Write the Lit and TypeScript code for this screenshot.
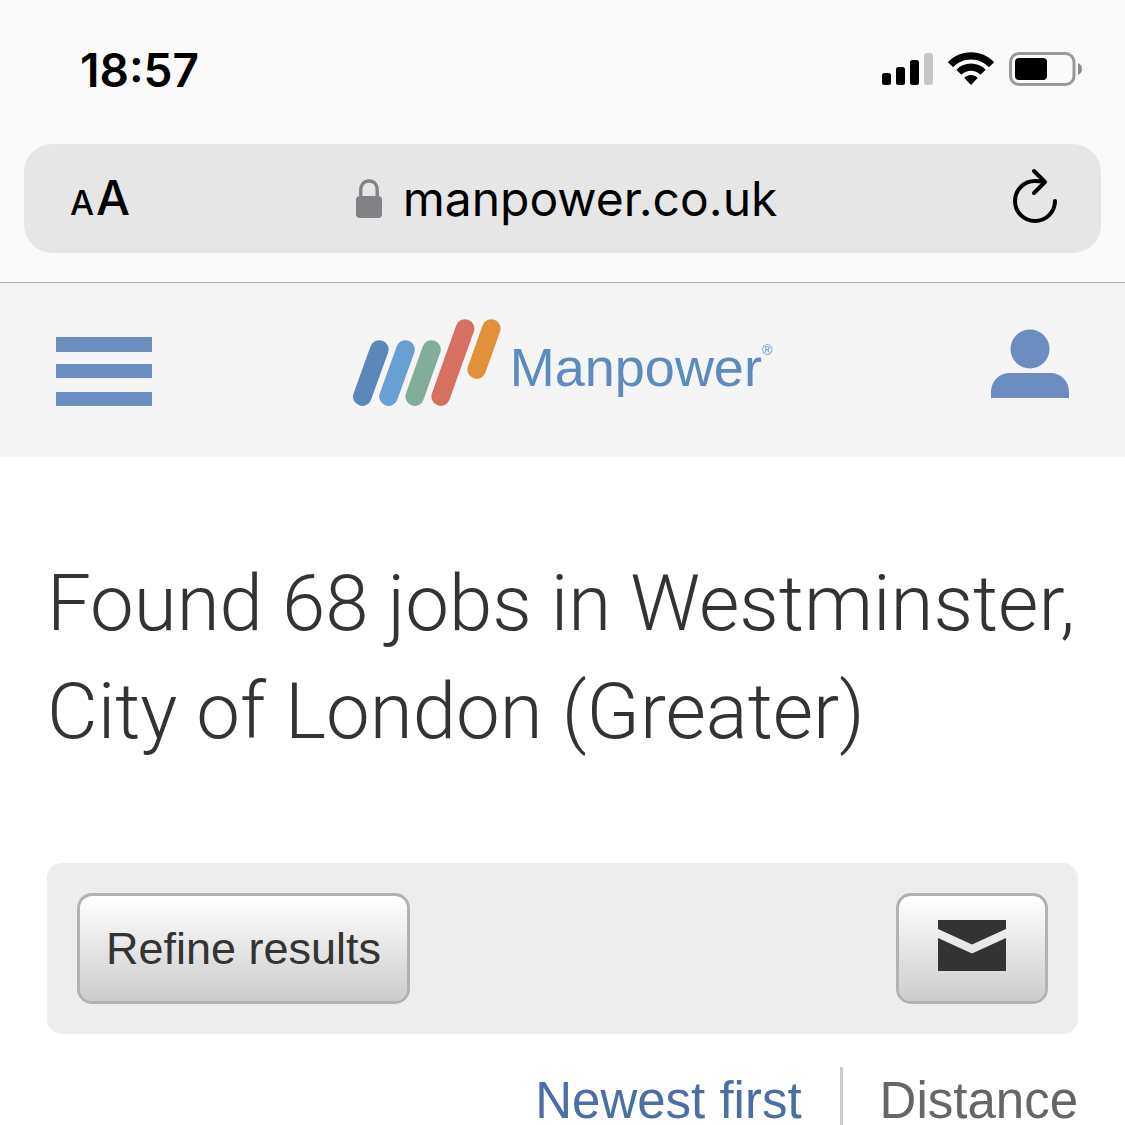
import { LitElement, html, css } from "lit";
import { customElement, state } from "lit/decorators.js";

@customElement("status-bar")
class StatusBar extends LitElement {
  static styles = css`
    :host {
      display: flex;
      justify-content: space-between;
      align-items: center;
      padding: 40px 42px 0 80px;
      color: #000;
      font-family: Inter, "Liberation Sans", sans-serif;
    }
    .time {
      font-size: 46px;
      line-height: 60px;
      font-weight: 600;
    }
    .icons {
      display: flex;
      align-items: center;
      gap: 15px;
      padding-bottom: 2px;
    }
    svg {
      display: block;
    }
  `;
  render() {
    return html`
      <span class="time">18:57</span>
      <div class="icons">
        <svg width="51" height="34" viewBox="0 0 51 34" role="img" aria-label="Signal: three of four bars">
          <rect x="0" y="21" width="9" height="12" rx="2.5" />
          <rect x="14" y="15" width="9" height="18" rx="2.5" />
          <rect x="28" y="8" width="9" height="25" rx="2.5" />
          <rect x="42" y="1" width="9" height="32" rx="2.5" fill="#c7c7c7" />
        </svg>
        <svg width="46" height="34" viewBox="0 0 46 34" role="img" aria-label="Wi-Fi">
          <path d="M23 .3C14 .3 6 4 .3 9.800Q0 10.200 .4 10.700L4.600 14.800Q5 15.100 5.500 14.700C10 10.200 16 7.400 23 7.400S36 10.200 40.500 14.700Q41 15.100 41.400 14.800L45.600 10.700Q46 10.200 45.700 9.800C40 4 32 .3 23 .3Z" />
          <path d="M23 11.500C17.500 11.500 12.500 13.700 8.800 17.300Q8.400 17.800 8.800 18.200L13 22.300Q13.500 22.700 14 22.300C16.500 20 19.500 18.700 23 18.700S29.500 20 32 22.300Q32.500 22.700 33 22.300L37.200 18.200Q37.600 17.800 37.200 17.300C33.500 13.700 28.500 11.500 23 11.500Z" />
          <path d="M23 23C20.500 23 18.300 23.900 16.600 25.400Q16.200 25.900 16.600 26.300L22.500 32.500Q23 32.900 23.500 32.500L29.400 26.300Q29.800 25.900 29.400 25.400C27.700 23.900 25.500 23 23 23Z" />
        </svg>
        <svg width="74" height="34" viewBox="0 0 74 34" role="img" aria-label="Battery about half full">
          <rect x="1.500" y="1.500" width="63.500" height="31" rx="8.500" fill="none" stroke="#999" stroke-width="3" />
          <rect x="6" y="6" width="32" height="22" rx="4" />
          <path d="M69 11C71.500 12 73 14.300 73 17S71.500 22 69 23Z" fill="#8c8c8c" />
        </svg>
      </div>
    `;
  }
}

@customElement("address-bar")
class AddressBar extends LitElement {
  static styles = css`
    :host {
      display: grid;
      grid-template-columns: 1fr auto 1fr;
      align-items: center;
      margin: 44px 24px 29px;
      padding: 0 42px;
      height: 109px;
      border-radius: 28px;
      background: #e6e6e7;
      font-family: Inter, "Liberation Sans", sans-serif;
    }
    button {
      display: flex;
      align-items: center;
      border: 0;
      padding: 0;
      background: none;
      color: #000;
      font: inherit;
      cursor: pointer;
    }
    svg {
      display: block;
    }
    .text-size {
      justify-self: start;
      align-items: baseline;
      gap: 2px;
      padding: 4px 0 0 4px;
      font-weight: 500;
      line-height: 60px;
    }
    .small {
      font-size: 34px;
    }
    .large {
      font-size: 48px;
    }
    .site {
      gap: 21px;
      padding: 0 0 0 8px;
      font-size: 48px;
      line-height: 60px;
    }
    .reload {
      justify-self: end;
      padding: 0 1px 6px 0;
    }
  `;
  render() {
    return html`
      <button class="text-size" type="button" aria-label="Text size">
        <span class="small">A</span><span class="large">A</span>
      </button>
      <button class="site" type="button">
        <svg width="26" height="40" viewBox="0 0 26 40" aria-hidden="true">
          <path d="M4.800 18V11C4.800 5.300 8 2 13 2S21.200 5.300 21.200 11V18" fill="none" stroke="#828186" stroke-width="3.400" />
          <rect x="0" y="17" width="26" height="22" rx="4" fill="#828186" />
        </svg>
        <span>manpower.co.uk</span>
      </button>
      <button class="reload" type="button" aria-label="Reload">
        <svg width="46" height="56" viewBox="0 0 46 56" fill="none" stroke="#000" stroke-width="4" stroke-linecap="round" stroke-linejoin="round" aria-hidden="true">
          <path d="M43 33A20 20 0 1 1 23 13Q28 13 32 14" />
          <path d="M22 3L33 14L22 25" />
        </svg>
      </button>
    `;
  }
}

@customElement("site-header")
class SiteHeader extends LitElement {
  static styles = css`
    :host {
      display: grid;
      grid-template-columns: 1fr auto 1fr;
      align-items: center;
      height: 174px;
      padding: 0 56px;
      border-top: 1px solid #b0b0b1;
      background: #f5f5f5;
    }
    button {
      display: block;
      border: 0;
      padding: 0;
      background: none;
      cursor: pointer;
    }
    svg {
      display: block;
    }
    .menu {
      padding-top: 4px;
    }
    .account {
      justify-self: end;
      padding-bottom: 12px;
    }
    .logo {
      display: flex;
      align-items: center;
      gap: 9px;
      padding-bottom: 14px;
      color: #5b8bbf;
      font-family: "Liberation Sans", Arial, sans-serif;
      text-decoration: none;
    }
    .name {
      display: flex;
      font-size: 54px;
      line-height: 60px;
      padding-top: 8px;
    }
    .mark {
      font-size: 14px;
      line-height: 26px;
    }
  `;
  render() {
    return html`
      <button class="menu" type="button" aria-label="Menu">
        <svg width="96" height="70" viewBox="0 0 96 70" fill="#6b8dc0" aria-hidden="true">
          <rect width="96" height="15" />
          <rect y="27" width="96" height="14" />
          <rect y="55" width="96" height="14" />
        </svg>
      </button>
      <a class="logo" href="#home">
        <svg width="148" height="88" viewBox="0 0 148 88" fill="none" stroke-width="18.600" stroke-linecap="round" aria-hidden="true">
          <path d="M26.300 30.500L9.300 77.600" stroke="#5b88bb" />
          <path d="M52.500 30.500L35.500 77.600" stroke="#68a0d3" />
          <path d="M78.500 30.500L61.700 77.600" stroke="#82ad99" />
          <path d="M112 9.500L87.700 77.600" stroke="#d87062" />
          <path d="M138.300 9.500L123.700 50.500" stroke="#e09139" />
        </svg>
        <span class="name">Manpower<span class="mark">®</span></span>
      </a>
      <button class="account" type="button" aria-label="Account">
        <svg width="78" height="70" viewBox="0 0 78 70" fill="#6b8dc0" aria-hidden="true">
          <circle cx="39" cy="20" r="19.500" />
          <path d="M0 69V63C0 52 8 44 19 44H59C70 44 78 52 78 63V69Z" />
        </svg>
      </button>
    `;
  }
}

@customElement("app-root")
class AppRoot extends LitElement {
  static styles = css`
    :host {
      display: block;
      min-height: 100vh;
      background: #fff;
      color: #333;
      font-family: "Liberation Sans", Arial, sans-serif;
    }
    .browser {
      display: flow-root;
      background: #fafafa;
    }
    main {
      padding: 93px 47px 0;
    }
    h1 {
      margin: 0;
      font-family: Roboto, "Liberation Sans", sans-serif;
      font-size: 78px;
      line-height: 108px;
      font-weight: 300;
    }
    .tools {
      display: flex;
      justify-content: space-between;
      margin-top: 97px;
      padding: 30px;
      border-radius: 15px;
      background: #ededed;
    }
    .tool {
      display: flex;
      align-items: center;
      justify-content: center;
      height: 111px;
      padding: 0 26px;
      border: 3px solid #b2b2b2;
      border-radius: 15px;
      background: linear-gradient(#fff, #ccc) padding-box;
      color: #333;
      font: inherit;
      font-size: 45px;
      cursor: pointer;
    }
    .mail {
      padding: 0 39px;
    }
    .mail svg {
      display: block;
      margin-bottom: 6px;
    }
    .sort {
      display: flex;
      justify-content: flex-end;
      margin-top: 33px;
      font-size: 51px;
      line-height: 48px;
    }
    .option {
      padding: 10px 0 0 37px;
      color: #666;
      text-decoration: none;
    }
    .option:first-child {
      padding: 10px 38px 0 0;
      border-right: 3px solid #ccc;
    }
    .option.current {
      color: #4a6ea5;
    }
  `;

  @state() private order = "Newest first";

  private choose(event: Event, name: string) {
    event.preventDefault();
    this.order = name;
  }

  render() {
    return html`
      <div class="browser">
        <status-bar></status-bar>
        <address-bar></address-bar>
      </div>
      <site-header></site-header>
      <main>
        <h1>Found 68 jobs in Westminster, City of London (Greater)</h1>
        <div class="tools">
          <button class="tool" type="button">Refine results</button>
          <button class="tool mail" type="button" aria-label="Email these jobs">
            <svg width="68" height="51" viewBox="0 0 68 51" fill="#333" aria-hidden="true">
              <path d="M0 0H68V9L34 24.500L0 9Z" />
              <path d="M0 18L34 33.500L68 18V51H0Z" />
            </svg>
          </button>
        </div>
        <nav class="sort" aria-label="Sort order">
          ${["Newest first", "Distance"].map(
            (name) => html`<a
              class="option ${this.order === name ? "current" : ""}"
              href="#sort"
              @click=${(e: Event) => this.choose(e, name)}
              >${name}</a
            >`
          )}
        </nav>
      </main>
    `;
  }
}
